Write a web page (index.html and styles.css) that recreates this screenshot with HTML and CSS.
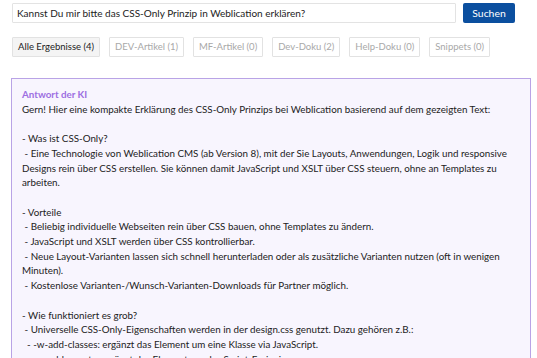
FILE: index.html
```html
<!DOCTYPE html>
<html lang="de">
<head>
<meta charset="utf-8">
<title>Suche</title>
<link rel="stylesheet" href="styles.css">
</head>
<body>
<div class="page">
  <form class="search">
    <input class="search-input" type="text" value="Kannst Du mir bitte das CSS-Only Prinzip in Weblication erklären?">
    <button class="search-btn" type="button">Suchen</button>
  </form>
  <div class="tabs">
    <span class="tab active">Alle Ergebnisse (4)</span>
    <span class="tab">DEV-Artikel (1)</span>
    <span class="tab">MF-Artikel (0)</span>
    <span class="tab">Dev-Doku (2)</span>
    <span class="tab">Help-Doku (0)</span>
    <span class="tab">Snippets (0)</span>
  </div>
  <div class="answer">
    <div class="answer-title">Antwort der KI</div>
    <div class="answer-text">Gern! Hier eine kompakte Erklärung des CSS-Only Prinzips bei Weblication basierend auf dem gezeigten Text:

- Was ist CSS-Only?
 - Eine Technologie von Weblication CMS (ab Version 8), mit der Sie Layouts, Anwendungen, Logik und responsive Designs rein über CSS erstellen. Sie können damit JavaScript und XSLT über CSS steuern, ohne an Templates zu arbeiten.

- Vorteile
 - Beliebig individuelle Webseiten rein über CSS bauen, ohne Templates zu ändern.
 - JavaScript und XSLT werden über CSS kontrollierbar.
 - Neue Layout-Varianten lassen sich schnell herunterladen oder als zusätzliche Varianten nutzen (oft in wenigen Minuten).
 - Kostenlose Varianten-/Wunsch-Varianten-Downloads für Partner möglich.

- Wie funktioniert es grob?
 - Universelle CSS-Only-Eigenschaften werden in der design.css genutzt. Dazu gehören z.B.:
  - -w-add-classes: ergänzt das Element um eine Klasse via JavaScript.
  - -w-add-events: ergänzt das Element um das Script-Ereignis.</div>
  </div>
</div>
</body>
</html>
```
FILE: styles.css
```css
html, body {
  margin: 0;
  padding: 0;
  background: #ffffff;
}
body {
  font-family: Lato, "Open Sans", sans-serif;
  font-size: 9.8px;
  color: #222222;
  overflow: hidden;
}
.page {
  padding: 3px 6px 0 11px;
}
.search {
  display: flex;
  gap: 7px;
  margin: 0 16px 0 1px;
}
.search-input {
  flex: 1;
  height: 20px;
  box-sizing: border-box;
  border: 1px solid #e3e3e3;
  border-radius: 1px;
  padding: 0 4px;
  font-family: Lato, "Open Sans", sans-serif;
  font-size: 10px;
  color: #222222;
  background: #ffffff;
  outline: none;
}
.search-btn {
  width: 52px;
  height: 20px;
  box-sizing: border-box;
  border: 0;
  border-radius: 2px;
  background: #0b4f9f;
  color: #ffffff;
  font-family: Lato, "Open Sans", sans-serif;
  font-size: 10.4px;
  padding: 0;
}
.tabs {
  display: flex;
  gap: 9px;
  margin: 14px 0 0 1px;
}
.tab {
  box-sizing: border-box;
  height: 20px;
  line-height: 18px;
  padding: 0 5px;
  border: 1px solid #e2e2e2;
  border-radius: 1px;
  color: #a8a8a8;
  background: #ffffff;
  font-size: 9.5px;
  white-space: nowrap;
}
.tab.active {
  background: #f4f4f4;
  color: #222222;
}
.answer {
  margin-top: 21px;
  border: 1px solid #b9a3e6;
  background: #f8f5fe;
  padding: 8px 10px 10px 10px;
  line-height: 14.7px;
}
.answer-title {
  color: #9d6fe2;
  font-weight: bold;
}
.answer-text {
  white-space: pre-wrap;
  color: #222222;
}
```
